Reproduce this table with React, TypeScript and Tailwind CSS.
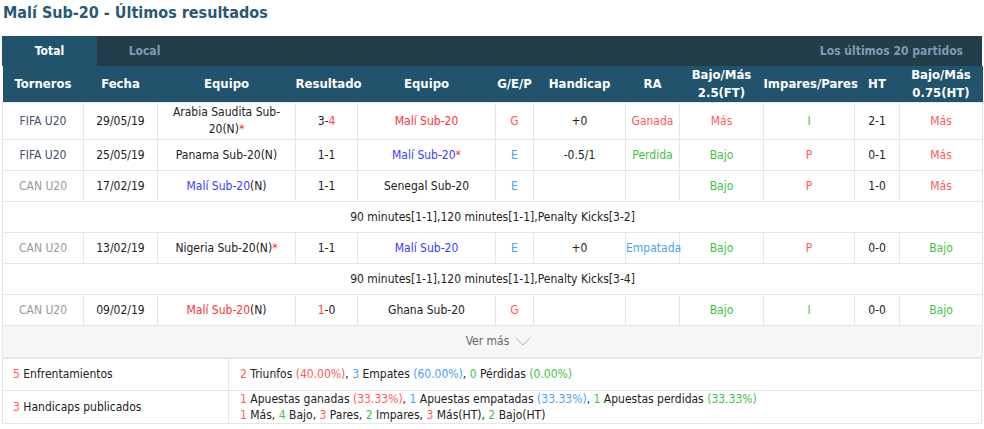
const RED = "text-[#ff5a5a]";
const BLUE = "text-[#4aa3ef]";
const GREEN = "text-[#3fc33f]";

type Cell = React.ReactNode;

const cols = [81, 74, 138, 62, 138, 38, 92, 54, 84, 91, 45, 83];

const Star = () => <span className="text-[#ff2d2d]">*</span>;

const rows: { league: string; leagueCls: string; cells: Cell[]; note?: string; tall?: boolean }[] = [
  {
    league: "FIFA U20",
    leagueCls: "text-[#44516a]",
    tall: true,
    cells: [
      "29/05/19",
      <span>
        Arabia Saudita Sub-
        <br />
        20(N)
        <Star />
      </span>,
      <span>
        3-<span className="text-[#ff3b3b]">4</span>
      </span>,
      <span className="text-[#ff3040]">Malí Sub-20</span>,
      <span className={RED}>G</span>,
      "+0",
      <span className={RED}>Ganada</span>,
      <span className={RED}>Más</span>,
      <span className={GREEN}>I</span>,
      "2-1",
      <span className={RED}>Más</span>,
    ],
  },
  {
    league: "FIFA U20",
    leagueCls: "text-[#44516a]",
    cells: [
      "25/05/19",
      "Panama Sub-20(N)",
      "1-1",
      <span className="text-[#3b3bff]">
        Malí Sub-20
        <Star />
      </span>,
      <span className={BLUE}>E</span>,
      "-0.5/1",
      <span className={GREEN}>Perdida</span>,
      <span className={GREEN}>Bajo</span>,
      <span className={RED}>P</span>,
      "0-1",
      <span className={RED}>Más</span>,
    ],
  },
  {
    league: "CAN U20",
    leagueCls: "text-[#9a9a9a]",
    note: "90 minutes[1-1],120 minutes[1-1],Penalty Kicks[3-2]",
    cells: [
      "17/02/19",
      <span>
        <span className="text-[#3b3bff]">Malí Sub-20</span>(N)
      </span>,
      "1-1",
      "Senegal Sub-20",
      <span className={BLUE}>E</span>,
      "",
      "",
      <span className={GREEN}>Bajo</span>,
      <span className={RED}>P</span>,
      "1-0",
      <span className={RED}>Más</span>,
    ],
  },
  {
    league: "CAN U20",
    leagueCls: "text-[#9a9a9a]",
    note: "90 minutes[1-1],120 minutes[1-1],Penalty Kicks[3-4]",
    cells: [
      "13/02/19",
      <span>
        Nigeria Sub-20(N)
        <Star />
      </span>,
      "1-1",
      <span className="text-[#3b3bff]">Malí Sub-20</span>,
      <span className={BLUE}>E</span>,
      "+0",
      <span className={BLUE}>Empatada</span>,
      <span className={GREEN}>Bajo</span>,
      <span className={RED}>P</span>,
      "0-0",
      <span className={GREEN}>Bajo</span>,
    ],
  },
  {
    league: "CAN U20",
    leagueCls: "text-[#9a9a9a]",
    cells: [
      "09/02/19",
      <span>
        <span className="text-[#ff3040]">Malí Sub-20</span>(N)
      </span>,
      <span>
        <span className="text-[#ff3b3b]">1</span>-0
      </span>,
      "Ghana Sub-20",
      <span className={RED}>G</span>,
      "",
      "",
      <span className={GREEN}>Bajo</span>,
      <span className={GREEN}>I</span>,
      "0-0",
      <span className={GREEN}>Bajo</span>,
    ],
  },
];

const heads: Cell[] = [
  "Torneros",
  "Fecha",
  "Equipo",
  "Resultado",
  "Equipo",
  "G/E/P",
  "Handicap",
  "RA",
  <span>
    Bajo/Más
    <br />
    2.5(FT)
  </span>,
  "Impares/Pares",
  "HT",
  <span>
    Bajo/Más
    <br />
    0.75(HT)
  </span>,
];

export default function App() {
  return (
    <div
      className="w-[984px] h-[429px] bg-white text-[12px] text-[#222] leading-[17px] overflow-hidden"
      style={{ fontFamily: '"DejaVu Sans Condensed", Tahoma, "Liberation Sans", sans-serif' }}
    >
      <h1 className="pl-[3px] h-[26px] pt-[3px] text-[16px] leading-[20px] font-bold text-[#2a5874]">
        Malí Sub-20 - Últimos resultados
      </h1>
      <div className="mx-[2px] mt-[10px]">
        <div className="flex h-[30px] bg-[#233d4a] items-center font-bold text-[12px]">
          <div className="w-[95px] h-full bg-[#22536c] text-white flex items-center justify-center">Total</div>
          <div className="w-[95px] text-center text-[#7d9cb1]">Local</div>
          <div className="flex-1 text-right pr-[19px] text-[#7d9cb1]">Los últimos 20 partidos</div>
        </div>
        <table className="w-[980px] table-fixed border-collapse text-center">
          <colgroup>
            {cols.map((w, i) => (
              <col key={i} style={{ width: w }} />
            ))}
          </colgroup>
          <thead>
            <tr className="h-[36px] bg-[#22536c] text-white font-bold text-[13px] leading-[18px]">
              {heads.map((h, i) => (
                <th key={i} className="font-bold px-0 h-[36px]">
                  {h}
                </th>
              ))}
            </tr>
          </thead>
          <tbody>
            {rows.map((r, i) => (
              <Row key={i} r={r} />
            ))}
            <tr className="h-[32px] bg-[#f6f6f6]">
              <td colSpan={12} className="border border-[#e6e6e6] text-[#666]">
                <span className="inline-flex items-center gap-[6px] pl-[12px]">
                  Ver más
                  <svg width="16" height="9" viewBox="0 0 16 9" fill="none">
                    <path d="M0.5 0.5 L8 8 L15.5 0.5" stroke="#b5b5b5" strokeWidth="1" />
                  </svg>
                </span>
              </td>
            </tr>
          </tbody>
        </table>
        <table className="w-[980px] table-fixed border-collapse mt-0 text-left">
          <colgroup>
            <col style={{ width: 226 }} />
            <col />
          </colgroup>
          <tbody>
            <tr className="h-[32px]">
              <td className="border border-[#e6e6e6] pl-[10px]">
                <span className={RED}>5</span> Enfrentamientos
              </td>
              <td className="border border-[#e6e6e6] pl-[11px]">
                <span className={RED}>2</span> Triunfos <span className={RED}>(40.00%)</span>,{" "}
                <span className={BLUE}>3</span> Empates <span className={BLUE}>(60.00%)</span>,{" "}
                <span className={GREEN}>0</span> Pérdidas <span className={GREEN}>(0.00%)</span>
              </td>
            </tr>
            <tr className="h-[32px]">
              <td className="border border-[#e6e6e6] pl-[10px]">
                <span className={RED}>3</span> Handicaps publicados
              </td>
              <td className="border border-[#e6e6e6] pl-[11px] py-0 leading-[16px]">
                <div>
                  <span className={RED}>1</span> Apuestas ganadas <span className={RED}>(33.33%)</span>,{" "}
                  <span className={BLUE}>1</span> Apuestas empatadas <span className={BLUE}>(33.33%)</span>,{" "}
                  <span className={GREEN}>1</span> Apuestas perdidas <span className={GREEN}>(33.33%)</span>
                </div>
                <div>
                  <span className={RED}>1</span> Más, <span className={GREEN}>4</span> Bajo,{" "}
                  <span className={RED}>3</span> Pares, <span className={GREEN}>2</span> Impares,{" "}
                  <span className={RED}>3</span> Más(HT), <span className={GREEN}>2</span> Bajo(HT)
                </div>
              </td>
            </tr>
          </tbody>
        </table>
      </div>
    </div>
  );
}

function Row({ r }: { r: (typeof rows)[number] }) {
  return (
    <>
      <tr className={r.tall ? "h-[37px]" : "h-[31px]"}>
        <td className={`border border-[#e6e6e6] ${r.leagueCls}`}>{r.league}</td>
        {r.cells.map((c, i) => (
          <td key={i} className="border border-[#e6e6e6] px-0 whitespace-nowrap">
            {c}
          </td>
        ))}
      </tr>
      {r.note && (
        <tr className="h-[31px]">
          <td colSpan={12} className="border border-[#e6e6e6]">
            {r.note}
          </td>
        </tr>
      )}
    </>
  );
}
